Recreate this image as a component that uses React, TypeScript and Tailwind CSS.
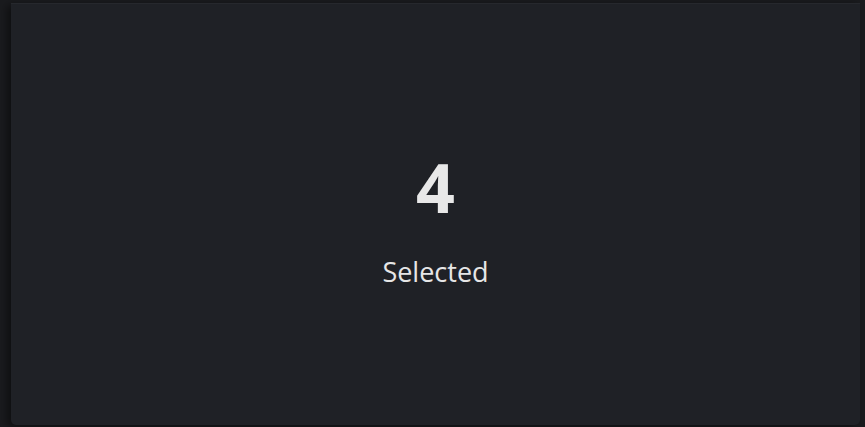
import React from "react";

export default function App() {
  return (
    <div className="w-[865px] h-[427px] bg-[#1a1b1e] overflow-hidden flex flex-col" style={{ fontFamily: '"Open Sans", "Noto Sans", sans-serif' }}>
      <div className="ml-[11px] mr-[5px] mt-[3px] h-[422px] bg-[#1f2126] rounded-b-[5px] border-t border-[#26282d] shadow-[-4px_2px_8px_rgba(0,0,0,0.45)] flex flex-col items-center pt-[143px]">
        <div className="text-[68px] leading-[80px] font-bold text-[#e8e8e8]">4</div>
        <div className="mt-[28px] text-[27px] leading-[34px] text-[#e6e6e6]">Selected</div>
      </div>
    </div>
  );
}
